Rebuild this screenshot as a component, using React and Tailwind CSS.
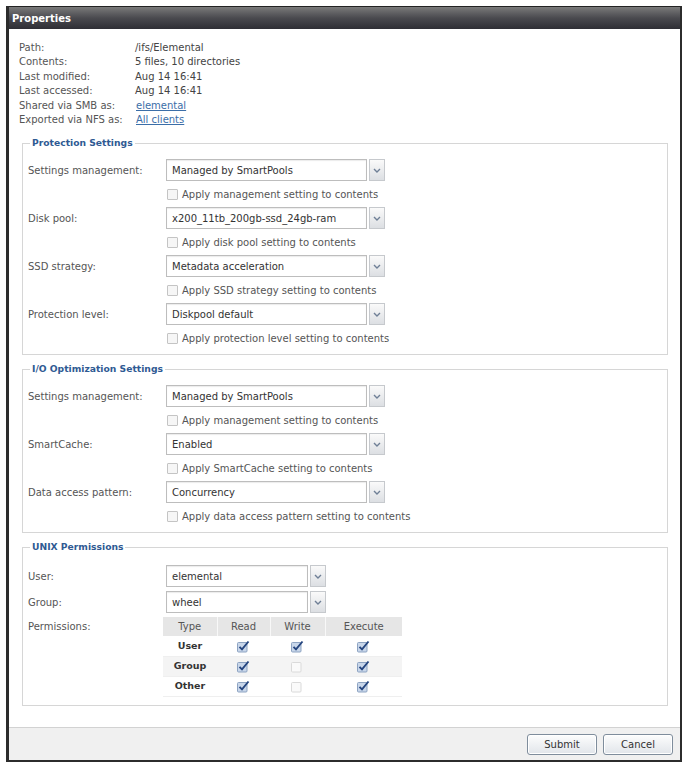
import React from "react";

function Arrow() {
  return (
    <div className="h-full w-[16px] shrink-0 border border-[#c6c9cd] bg-linear-to-b from-[#fafafa] to-[#dcdfe3] flex items-center justify-center">
      <svg width="8" height="5" viewBox="0 0 8 5">
        <path d="M1 1l3 3 3-3" stroke="#6f7f96" strokeWidth="1.4" fill="none" />
      </svg>
    </div>
  );
}

function Select({ value, wide }) {
  return (
    <div className="flex items-center gap-[2px] h-[22px]">
      <div
        className={
          (wide ? "w-[201px] " : "w-[142px] ") +
          "h-full border border-[#bdbdbd] bg-white flex items-center pl-[5px] text-[#333] shadow-[inset_0_1px_1px_rgba(0,0,0,0.08)]"
        }
      >
        {value}
      </div>
      <Arrow />
    </div>
  );
}

function Box() {
  return <div className="w-[11px] h-[11px] border border-[#c4c4c4] bg-[#f6f6f6] rounded-[1px]" />;
}

function Checked() {
  return (
    <svg width="13" height="13" viewBox="0 0 13 13" className="inline-block">
      <rect x="0.5" y="2.5" width="9.5" height="9.5" rx="1" fill="#c9d7ea" stroke="#8da3c2" />
      <path d="M2.5 6.8 L5 9.4 L11.5 1.5" stroke="#25457f" strokeWidth="1.9" fill="none" />
    </svg>
  );
}

function Unchecked() {
  return (
    <svg width="13" height="13" viewBox="0 0 13 13" className="inline-block">
      <rect x="0.5" y="2.5" width="9.5" height="9.5" rx="1" fill="#fafafa" stroke="#dadada" />
    </svg>
  );
}

function FormRow({ label, value, apply }) {
  return (
    <>
      <div className="flex items-center h-[24px]">
        <div className="w-[138px] shrink-0 text-[#555]">{label}</div>
        <Select value={value} wide />
      </div>
      <div className="flex items-center h-[24px] pl-[139px] gap-[4px] text-[#555]">
        <Box />
        <span>{apply}</span>
      </div>
    </>
  );
}

function Fieldset({ title, children, pb }) {
  return (
    <fieldset className={"ml-[13px] mr-[12px] border border-[#d6d6d6] pl-[5px] pr-[5px] pt-[9px] " + pb}>
      <legend className="ml-[2px] px-[2px] text-[9.2px] font-bold text-[#2f5a93] leading-[12px]">{title}</legend>
      {children}
    </fieldset>
  );
}

export default function App() {
  const info = [
    ["Path:", "/ifs/Elemental"],
    ["Contents:", "5 files, 10 directories"],
    ["Last modified:", "Aug 14 16:41"],
    ["Last accessed:", "Aug 14 16:41"],
    ["Shared via SMB as:", "elemental", true],
    ["Exported via NFS as:", "All clients", true],
  ];
  const perms = [
    ["User", true, true, true, ""],
    ["Group", true, false, true, "bg-[#f4f4f4]"],
    ["Other", true, false, true, ""],
  ];
  return (
    <div className="w-[682px] h-[762px] bg-white pt-[6px] pl-[6px] font-['DejaVu_Sans',Verdana,sans-serif] text-[10px]">
      <div className="h-[756px] flex flex-col border-l-[3px] border-r-[2px] border-b-[2px] border-[#2c2c2c]">
        <div className="h-[23px] shrink-0 border-t border-[#222] bg-linear-to-b from-[#7a7a7a] via-[#4a4a4f] to-[#2e2e35] flex items-center pl-[3px] text-white font-bold text-[10px]">
          Properties
        </div>
        <div className="flex-1 bg-white pt-[11px]">
          <div className="pl-[10px]">
            {info.map(([l, v, link]) => (
              <div key={l} className="flex h-[14.5px] items-center text-[#555]">
                <div className="w-[116px] shrink-0 whitespace-nowrap">{l}</div>
                <div className={link ? "text-[#3b6ea8] underline ml-[1px]" : "text-[#444]"}>{v}</div>
              </div>
            ))}
          </div>

          <div className="mt-[10px]">
            <Fieldset title="Protection Settings" pb="pb-[4px]">
              <FormRow label="Settings management:" value="Managed by SmartPools" apply="Apply management setting to contents" />
              <FormRow label="Disk pool:" value="x200_11tb_200gb-ssd_24gb-ram" apply="Apply disk pool setting to contents" />
              <FormRow label="SSD strategy:" value="Metadata acceleration" apply="Apply SSD strategy setting to contents" />
              <FormRow label="Protection level:" value="Diskpool default" apply="Apply protection level setting to contents" />
            </Fieldset>
          </div>

          <div className="mt-[8px]">
            <Fieldset title="I/O Optimization Settings" pb="pb-[4px]">
              <FormRow label="Settings management:" value="Managed by SmartPools" apply="Apply management setting to contents" />
              <FormRow label="SmartCache:" value="Enabled" apply="Apply SmartCache setting to contents" />
              <FormRow label="Data access pattern:" value="Concurrency" apply="Apply data access pattern setting to contents" />
            </Fieldset>
          </div>

          <div className="mt-[8px]">
            <Fieldset title="UNIX Permissions" pb="pb-[8px]">
              <div className="flex flex-col gap-[4px] pt-[3px]">
                <div className="flex items-center">
                  <div className="w-[138px] shrink-0 text-[#555]">User:</div>
                  <Select value="elemental" />
                </div>
                <div className="flex items-center">
                  <div className="w-[138px] shrink-0 text-[#555]">Group:</div>
                  <Select value="wheel" />
                </div>
                <div className="flex items-start">
                  <div className="w-[135px] shrink-0 text-[#555] leading-[19px]">Permissions:</div>
                  <table className="w-[239px] border-collapse text-center">
                    <thead>
                      <tr className="h-[19px] bg-[#e6e6e6] text-[#555]">
                        <th className="w-[54px] font-normal">Type</th>
                        <th className="w-[53px] font-normal border-l border-[#f8f8f8]">Read</th>
                        <th className="w-[55px] font-normal border-l border-[#f8f8f8]">Write</th>
                        <th className="w-[77px] font-normal border-l border-[#f8f8f8]">Execute</th>
                      </tr>
                    </thead>
                    <tbody>
                      {perms.map(([t, r, w, x, bg]) => (
                        <tr key={t} className={"h-[20px] border-b border-[#efefef] " + bg}>
                          <td className="font-bold text-[#333] text-[9.5px]">{t}</td>
                          <td>{r ? <Checked /> : <Unchecked />}</td>
                          <td>{w ? <Checked /> : <Unchecked />}</td>
                          <td>{x ? <Checked /> : <Unchecked />}</td>
                        </tr>
                      ))}
                    </tbody>
                  </table>
                </div>
              </div>
            </Fieldset>
          </div>
        </div>
        <div className="h-[33px] shrink-0 border-t border-[#d2d2d2] bg-[#f0f0f0] flex items-center justify-end gap-[6px] pr-[7px]">
          <button className="w-[70px] h-[21px] border border-[#7f8d9c] rounded-[3px] bg-linear-to-b from-[#fdfdfd] to-[#e1e5ea] text-[#333] text-[10px] shadow-[inset_0_0_0_1px_#fff]">
            Submit
          </button>
          <button className="w-[70px] h-[21px] border border-[#7f8d9c] rounded-[3px] bg-linear-to-b from-[#fdfdfd] to-[#e1e5ea] text-[#333] text-[10px] shadow-[inset_0_0_0_1px_#fff]">
            Cancel
          </button>
        </div>
      </div>
    </div>
  );
}
